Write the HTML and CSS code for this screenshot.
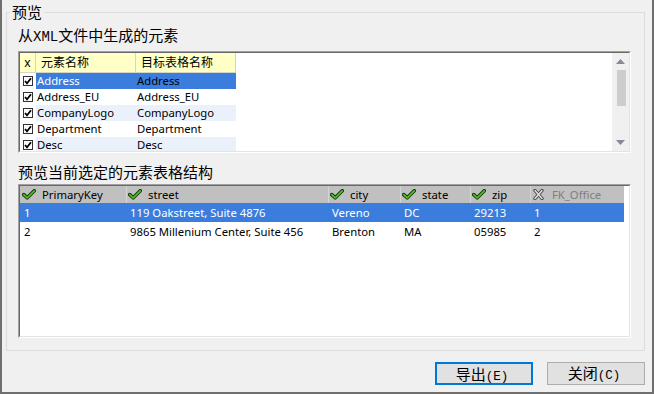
FILE: index.html
```html
<!DOCTYPE html>
<html lang="zh">
<head>
<meta charset="utf-8">
<title>预览</title>
<link rel="stylesheet" href="styles.css">
</head>
<body>
<div class="window">
  <fieldset class="group">
    <legend class="legend">预览</legend>
    <div class="label">从<span class="mono">XML</span>文件中生成的元素</div>
    <div class="sunken list">
      <div class="sunken-in list-in">
        <div class="grid">
          <div class="lrow lhead">
            <div class="c c1 cx">x</div>
            <div class="c c2">元素名称</div>
            <div class="c c3">目标表格名称</div>
          </div>
          <div class="lrow sel">
            <div class="c c1"><svg class="cb" viewBox="0 0 10 10" width="10" height="10"><rect x="0.5" y="0.5" width="9" height="9" fill="#fff" stroke="#333"/><path d="M2 5 L4 7.3 L8 2.3" fill="none" stroke="#000" stroke-width="1.8"/></svg></div>
            <div class="c c2 d">Address</div>
            <div class="c c3 d">Address</div>
          </div>
          <div class="lrow">
            <div class="c c1"><svg class="cb" viewBox="0 0 10 10" width="10" height="10"><rect x="0.5" y="0.5" width="9" height="9" fill="#fff" stroke="#333"/><path d="M2 5 L4 7.3 L8 2.3" fill="none" stroke="#000" stroke-width="1.8"/></svg></div>
            <div class="c c2 d">Address_EU</div>
            <div class="c c3 d">Address_EU</div>
          </div>
          <div class="lrow alt">
            <div class="c c1"><svg class="cb" viewBox="0 0 10 10" width="10" height="10"><rect x="0.5" y="0.5" width="9" height="9" fill="#fff" stroke="#333"/><path d="M2 5 L4 7.3 L8 2.3" fill="none" stroke="#000" stroke-width="1.8"/></svg></div>
            <div class="c c2 d">CompanyLogo</div>
            <div class="c c3 d">CompanyLogo</div>
          </div>
          <div class="lrow">
            <div class="c c1"><svg class="cb" viewBox="0 0 10 10" width="10" height="10"><rect x="0.5" y="0.5" width="9" height="9" fill="#fff" stroke="#333"/><path d="M2 5 L4 7.3 L8 2.3" fill="none" stroke="#000" stroke-width="1.8"/></svg></div>
            <div class="c c2 d">Department</div>
            <div class="c c3 d">Department</div>
          </div>
          <div class="lrow alt">
            <div class="c c1"><svg class="cb" viewBox="0 0 10 10" width="10" height="10"><rect x="0.5" y="0.5" width="9" height="9" fill="#fff" stroke="#333"/><path d="M2 5 L4 7.3 L8 2.3" fill="none" stroke="#000" stroke-width="1.8"/></svg></div>
            <div class="c c2 d">Desc</div>
            <div class="c c3 d">Desc</div>
          </div>
        </div>
        <div class="vscroll">
          <div class="sbtn"><svg viewBox="0 0 9 5" width="9" height="5"><polygon points="0,5 4.5,0 9,5" fill="#858a96"/></svg></div>
          <div class="track"><div class="thumb"></div></div>
          <div class="sbtn"><svg viewBox="0 0 9 5" width="9" height="5"><polygon points="0,0 9,0 4.5,5" fill="#858a96"/></svg></div>
        </div>
      </div>
    </div>
    <div class="label label2">预览当前选定的元素表格结构</div>
    <div class="sunken preview">
      <div class="sunken-in">
        <div class="ptable">
          <div class="phead">
            <div class="h w1"><svg class="ok" viewBox="0 0 14 11" width="14" height="11"><path d="M1.8 5.6 L5.2 8.8 L12.3 1.8" fill="none" stroke="#1d3312" stroke-width="3.6" stroke-linecap="round" stroke-linejoin="round"/><path d="M1.8 5.6 L5.2 8.8 L12.3 1.8" fill="none" stroke="#46c41e" stroke-width="1.7" stroke-linecap="round" stroke-linejoin="round"/></svg><span>PrimaryKey</span></div>
            <div class="h w2"><svg class="ok" viewBox="0 0 14 11" width="14" height="11"><path d="M1.8 5.6 L5.2 8.8 L12.3 1.8" fill="none" stroke="#1d3312" stroke-width="3.6" stroke-linecap="round" stroke-linejoin="round"/><path d="M1.8 5.6 L5.2 8.8 L12.3 1.8" fill="none" stroke="#46c41e" stroke-width="1.7" stroke-linecap="round" stroke-linejoin="round"/></svg><span>street</span></div>
            <div class="h w3"><svg class="ok" viewBox="0 0 14 11" width="14" height="11"><path d="M1.8 5.6 L5.2 8.8 L12.3 1.8" fill="none" stroke="#1d3312" stroke-width="3.6" stroke-linecap="round" stroke-linejoin="round"/><path d="M1.8 5.6 L5.2 8.8 L12.3 1.8" fill="none" stroke="#46c41e" stroke-width="1.7" stroke-linecap="round" stroke-linejoin="round"/></svg><span>city</span></div>
            <div class="h w4"><svg class="ok" viewBox="0 0 14 11" width="14" height="11"><path d="M1.8 5.6 L5.2 8.8 L12.3 1.8" fill="none" stroke="#1d3312" stroke-width="3.6" stroke-linecap="round" stroke-linejoin="round"/><path d="M1.8 5.6 L5.2 8.8 L12.3 1.8" fill="none" stroke="#46c41e" stroke-width="1.7" stroke-linecap="round" stroke-linejoin="round"/></svg><span>state</span></div>
            <div class="h w5"><svg class="ok" viewBox="0 0 14 11" width="14" height="11"><path d="M1.8 5.6 L5.2 8.8 L12.3 1.8" fill="none" stroke="#1d3312" stroke-width="3.6" stroke-linecap="round" stroke-linejoin="round"/><path d="M1.8 5.6 L5.2 8.8 L12.3 1.8" fill="none" stroke="#46c41e" stroke-width="1.7" stroke-linecap="round" stroke-linejoin="round"/></svg><span>zip</span></div>
            <div class="h w6 off"><svg class="ok" viewBox="0 0 14 11" width="14" height="11"><path d="M3 1.5 L10 9.5 M10 1.5 L3 9.5" fill="none" stroke="#4a4a4a" stroke-width="3.4" stroke-linecap="round"/><path d="M3 1.5 L10 9.5 M10 1.5 L3 9.5" fill="none" stroke="#e4e4e4" stroke-width="1.4" stroke-linecap="round"/></svg><span>FK_Office</span></div>
          </div>
          <div class="prow sel">
            <div class="p w1">1</div>
            <div class="p w2">119 Oakstreet, Suite 4876</div>
            <div class="p w3">Vereno</div>
            <div class="p w4">DC</div>
            <div class="p w5">29213</div>
            <div class="p w6">1</div>
          </div>
          <div class="prow">
            <div class="p w1">2</div>
            <div class="p w2">9865 Millenium Center, Suite 456</div>
            <div class="p w3">Brenton</div>
            <div class="p w4">MA</div>
            <div class="p w5">05985</div>
            <div class="p w6">2</div>
          </div>
        </div>
      </div>
    </div>
  </fieldset>
  <div class="buttons">
    <button class="btn default">导出<span class="mono">(E)</span></button>
    <button class="btn">关闭<span class="mono">(C)</span></button>
  </div>
</div>
</body>
</html>
```

FILE: styles.css
```css
html, body {
  margin: 0;
  padding: 0;
}
body {
  width: 654px;
  height: 394px;
  overflow: hidden;
  font-family: "Noto Sans", "Noto Sans CJK SC", sans-serif;
  color: #000;
}
.window {
  box-sizing: border-box;
  width: 654px;
  height: 394px;
  background: #f0f0f0;
  border-left: 2px solid #6f6f6f;
  border-right: 2px solid #6f6f6f;
  border-bottom: 2px solid #6f6f6f;
  overflow: hidden;
}
.group {
  box-sizing: border-box;
  margin: 3px 7px 0 4px;
  height: 348px;
  border: 1px solid #dcdcdc;
  padding: 4px 13px 0 11px;
  min-width: 0;
}
.legend {
  font-family: "Noto Sans CJK SC", sans-serif;
  font-size: 15px;
  line-height: 18px;
  padding: 0 2px;
  margin-left: -8px;
}
.label {
  font-family: "Noto Sans CJK SC", sans-serif;
  font-size: 15px;
  line-height: 20px;
  height: 20px;
  white-space: nowrap;
}
.mono {
  font-family: "Liberation Mono", monospace;
  font-size: 14px;
}
.label2 {
  margin-top: 9px;
}
.sunken {
  box-sizing: border-box;
  border: 1px solid;
  border-color: #a0a0a0 #ffffff #ffffff #a0a0a0;
}
.sunken-in {
  box-sizing: border-box;
  height: 100%;
  border: 1px solid;
  border-color: #696969 #e3e3e3 #e3e3e3 #696969;
  background: #fff;
  overflow: hidden;
}
.list {
  margin-top: 6px;
  height: 102px;
}
.list-in {
  display: flex;
}
.grid {
  flex: 1;
  font-size: 11.3px;
  overflow: hidden;
}
.lrow {
  display: flex;
  height: 16px;
  line-height: 16px;
}
.lrow .c {
  box-sizing: border-box;
  white-space: nowrap;
  overflow: hidden;
}
.c1 { width: 16px; }
.c2 { width: 100px; }
.c3 { width: 100px; }
.lrow .c1 {
  display: flex;
  justify-content: center;
  align-items: flex-start;
  padding-top: 3px;
}
.cb { display: block; }
.lhead {
  height: 20px;
  line-height: 19px;
  font-size: 12px;
}
.lhead .c {
  background: #ffffc6;
  border-right: 1px solid #d6d6c4;
  border-bottom: 1px solid #d6d6c4;
  padding-left: 5px;
}
.lhead .cx {
  padding: 0;
  display: block;
  text-align: center;
}
.lrow .d { padding-left: 1px; }
.lrow.alt .c2, .lrow.alt .c3 { background: #eaf1fb; }
.lrow.sel .c2, .lrow.sel .c3 { background: #3b7ddd; }
.lrow.sel .c2 { color: #fff; }
.vscroll {
  width: 17px;
  background: #f0f0f0;
  display: flex;
  flex-direction: column;
}
.sbtn {
  height: 17px;
  display: flex;
  align-items: center;
  justify-content: center;
}
.sbtn svg { display: block; }
.track {
  flex: 1;
  display: flex;
  justify-content: center;
}
.thumb {
  width: 9px;
  height: 36px;
  background: #cdcdcd;
  margin-left: 1px;
}
.preview {
  margin-top: 2px;
  height: 154px;
}
.ptable {
  width: 604px;
  font-size: 11.3px;
}
.phead {
  display: flex;
  height: 17px;
  line-height: 17px;
  background: #c0c0c0;
}
.h {
  box-sizing: border-box;
  display: flex;
  align-items: center;
  gap: 6px;
  padding-left: 2px;
  white-space: nowrap;
}
.h + .h { border-left: 1px solid #d4d4d4; padding-left: 1px; }
.ok { display: block; flex: none; }
.h.off span { color: #7f7f7f; }
.prow {
  display: flex;
  height: 19px;
  line-height: 19px;
}
.prow.sel {
  background: #3b7ddd;
  color: #fff;
}
.p {
  box-sizing: border-box;
  padding-left: 4px;
  white-space: nowrap;
}
.w1 { width: 106px; }
.w2 { width: 202px; }
.w3 { width: 72px; }
.w4 { width: 70px; }
.w5 { width: 60px; }
.w6 { width: 94px; }
.buttons {
  display: flex;
  justify-content: flex-end;
  gap: 14px;
  margin: 11px 7px 0 0;
}
.btn {
  box-sizing: border-box;
  width: 98px;
  height: 23px;
  background: #e1e1e1;
  border: 1px solid #adadad;
  border-radius: 0;
  padding: 0 4px 0 0;
  font-family: "Noto Sans CJK SC", sans-serif;
  font-size: 15px;
  line-height: 20px;
  color: #000;
}
.btn .mono { font-size: 12.5px; }
.btn.default {
  border: 2px solid #0078d7;
}
```
